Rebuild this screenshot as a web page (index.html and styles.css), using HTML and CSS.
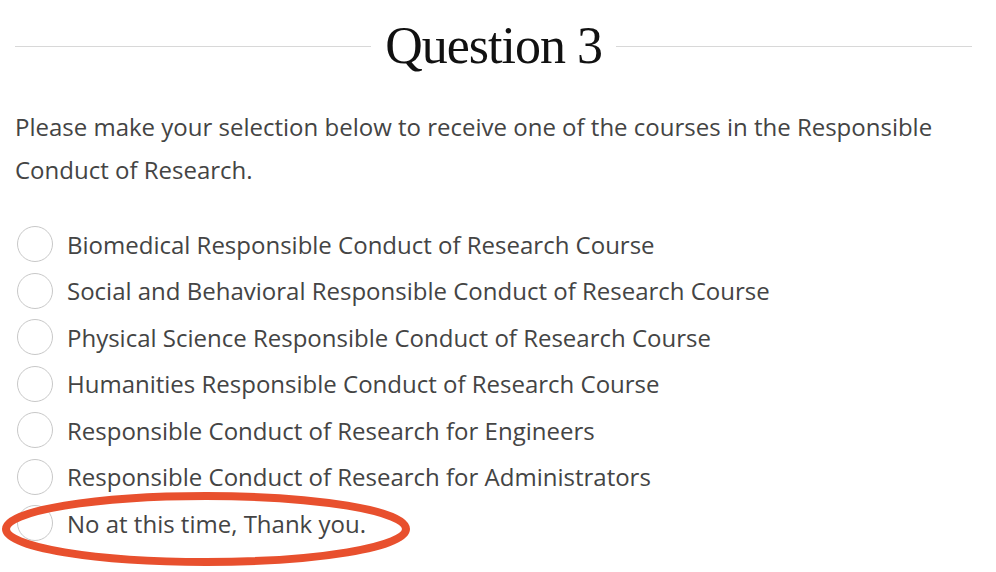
FILE: index.html
```html
<!DOCTYPE html>
<html>
<head>
<meta charset="utf-8">
<link rel="stylesheet" href="styles.css">
</head>
<body>
<div class="page">
  <div class="heading">
    <span class="rule"></span>
    <h2 class="title">Question 3</h2>
    <span class="rule"></span>
  </div>
  <p class="prompt">Please make your selection below to receive one of the courses in the Responsible Conduct of Research.</p>
  <ul class="options">
    <li class="option"><span class="radio"></span><span class="label">Biomedical Responsible Conduct of Research Course</span></li>
    <li class="option"><span class="radio"></span><span class="label">Social and Behavioral Responsible Conduct of Research Course</span></li>
    <li class="option"><span class="radio"></span><span class="label">Physical Science Responsible Conduct of Research Course</span></li>
    <li class="option"><span class="radio"></span><span class="label">Humanities Responsible Conduct of Research Course</span></li>
    <li class="option"><span class="radio"></span><span class="label">Responsible Conduct of Research for Engineers</span></li>
    <li class="option"><span class="radio"></span><span class="label">Responsible Conduct of Research for Administrators</span></li>
    <li class="option last"><span class="radio"></span><span class="label">No at this time, Thank you.</span>
      <svg class="mark" width="420" height="90" viewBox="0 0 420 90"><ellipse cx="210" cy="45" rx="200" ry="33" fill="none" stroke="#e8502e" stroke-width="8"/></svg>
    </li>
  </ul>
</div>
</body>
</html>
```
FILE: styles.css
```css
html, body {
  margin: 0;
  padding: 0;
  background: #fff;
}
.page {
  width: 957px;
  min-height: 572px;
  padding-left: 15px;
  font-family: "Open Sans", sans-serif;
  color: #444;
}
.heading {
  display: flex;
  align-items: center;
  gap: 14px;
  height: 92px;
}
.rule {
  flex: 1;
  border-top: 1px solid #d8d8d8;
}
.title {
  margin: 0;
  font-family: "Liberation Serif", serif;
  font-weight: normal;
  font-size: 52px;
  line-height: 60px;
  color: #111;
  letter-spacing: -1px;
}
.prompt {
  margin: 13px 0 0 0;
  font-size: 24px;
  line-height: 43px;
}
.options {
  list-style: none;
  margin: 30px 0 0 0;
  padding: 0;
}
.option {
  display: flex;
  align-items: center;
  height: 46.5px;
  font-size: 24px;
  position: relative;
}
.radio {
  width: 36px;
  height: 36px;
  border: 1.5px solid #c8c8c8;
  border-radius: 50%;
  margin-left: 2px;
  margin-right: 14px;
  box-sizing: border-box;
  flex: none;
}
.mark {
  position: absolute;
  left: -19px;
  top: -16px;
  width: 420px;
  height: 90px;
  overflow: visible;
}
```
